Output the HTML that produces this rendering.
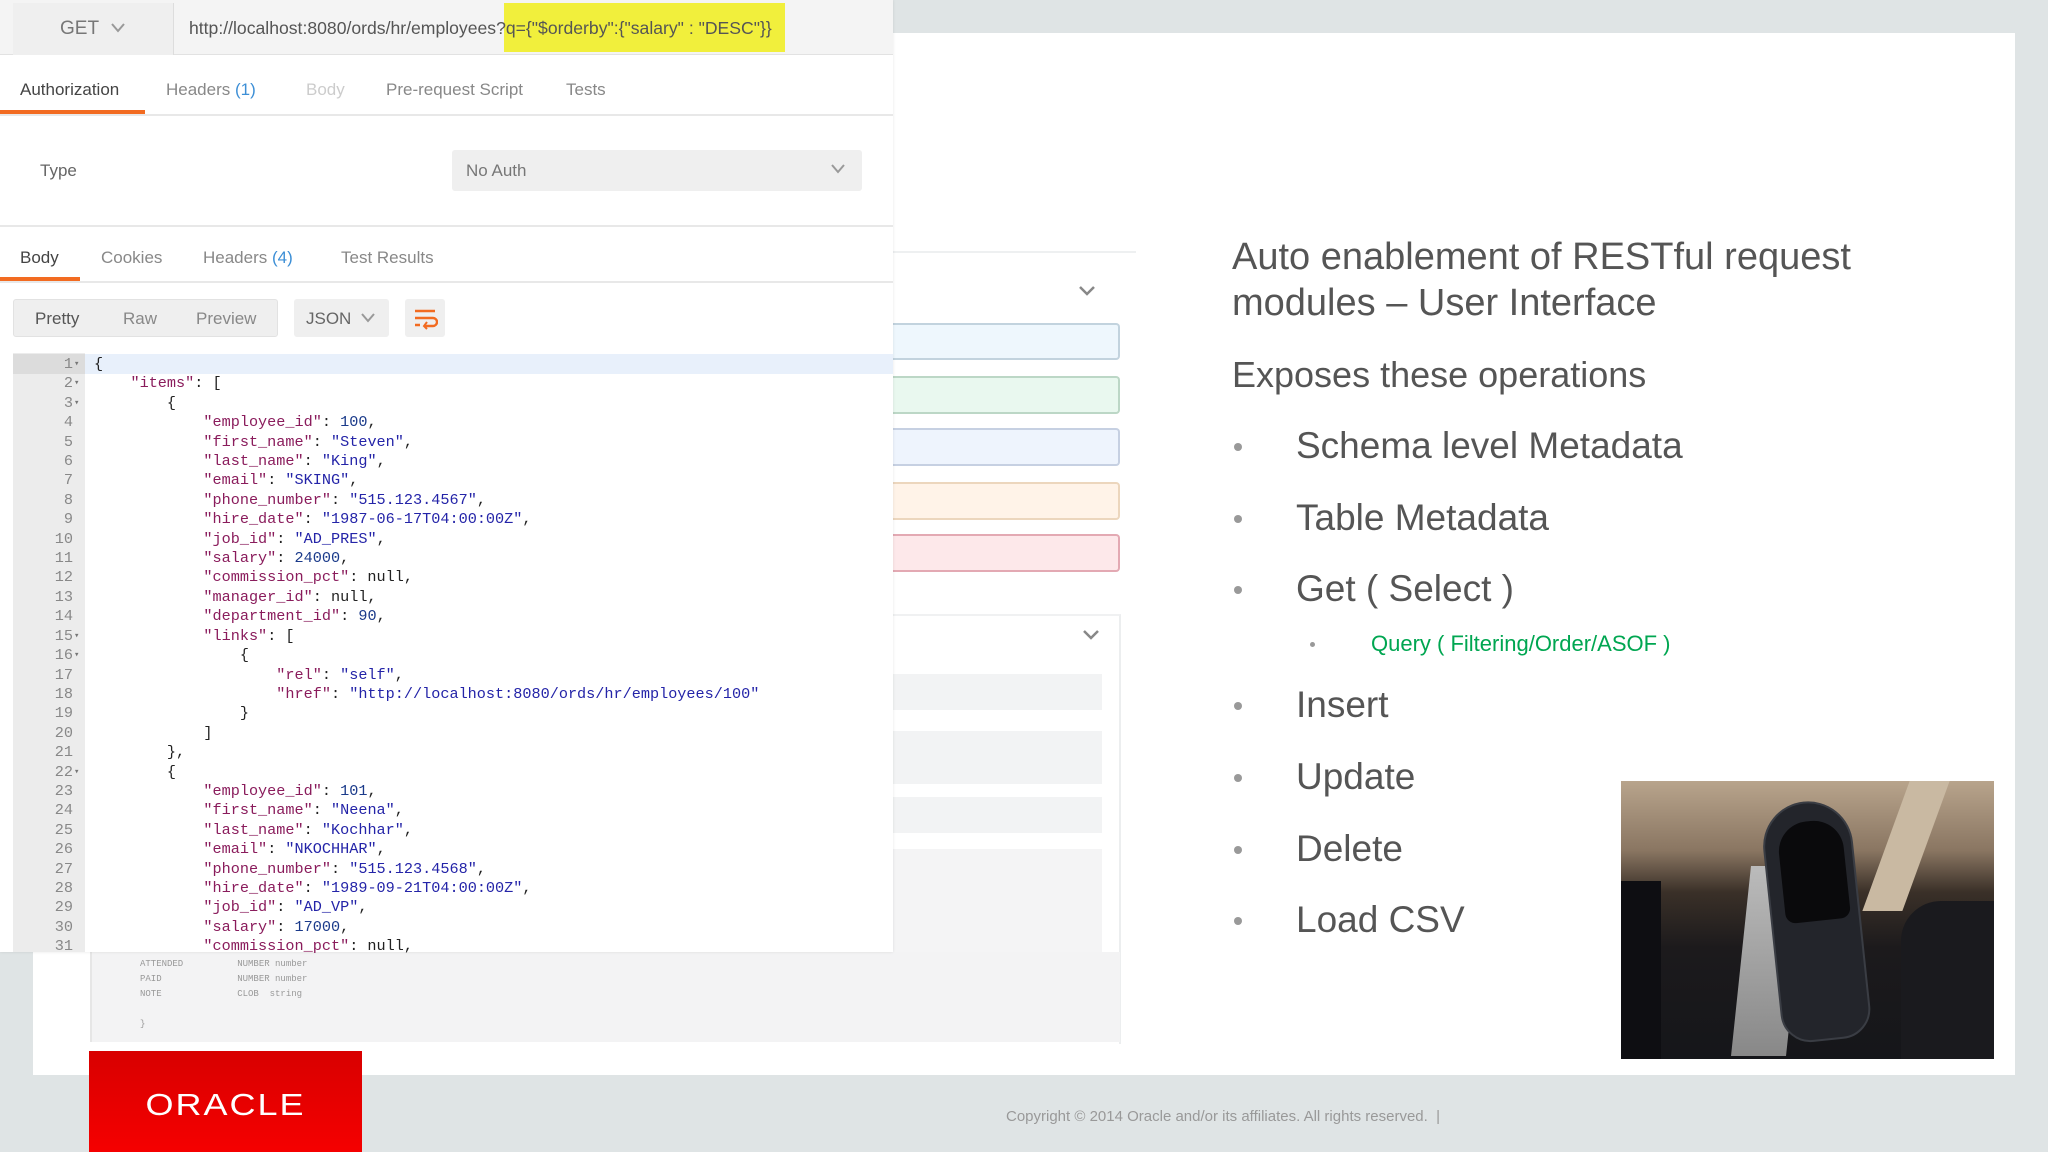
<!DOCTYPE html>
<html><head><meta charset="utf-8"><style>
*{margin:0;padding:0;box-sizing:border-box}
body{width:2048px;height:1152px;background:#dfe4e5;position:relative;overflow:hidden;font-family:"Liberation Sans",sans-serif}
.a{position:absolute}
.slide{left:33px;top:33px;width:1982px;height:1042px;background:#fff}
.pm{left:0;top:0;width:893px;height:952px;background:#fff;box-shadow:0 0 3px rgba(0,0,0,.1)}
.code{font-family:"Liberation Mono",monospace;font-size:15.2px;line-height:19.4px;white-space:pre;color:#222;letter-spacing:0}
.k{color:#8a1c5c}.s{color:#2424a8}.n{color:#1a3a8a}
.tab{font-size:17px;color:#888}
.b{font-family:"Liberation Sans",sans-serif;color:#555;font-size:37px}
.dot{width:8px;height:8px;border-radius:50%;background:#999}
</style></head><body>
<div class="a slide"></div>

<div class="a" style="left:893px;top:251px;width:243px;height:2px;background:#eef0f1"></div>
<svg class="a" style="left:1078px;top:285px" width="18" height="12"><path d="M2 2l7 7 7-7" fill="none" stroke="#888" stroke-width="2.5"/></svg>
<div class="a" style="left:893px;top:323px;width:227px;height:37px;background:#eef7fd;border:2px solid #c2d3de;border-left:none;border-radius:0 4px 4px 0"></div>
<div class="a" style="left:893px;top:376px;width:227px;height:38px;background:#e9f8ef;border:2px solid #bcd7c6;border-left:none;border-radius:0 4px 4px 0"></div>
<div class="a" style="left:893px;top:428px;width:227px;height:38px;background:#eef4fd;border:2px solid #c6d0e2;border-left:none;border-radius:0 4px 4px 0"></div>
<div class="a" style="left:893px;top:482px;width:227px;height:38px;background:#fff3e8;border:2px solid #ecd6bd;border-left:none;border-radius:0 4px 4px 0"></div>
<div class="a" style="left:893px;top:534px;width:227px;height:38px;background:#fde8ea;border:2px solid #e3a9b3;border-left:none;border-radius:0 4px 4px 0"></div>
<div class="a" style="left:893px;top:614px;width:228px;height:430px;border-right:2px solid #eceeef;border-top:2px solid #f0f1f2"></div>
<svg class="a" style="left:1082px;top:629px" width="18" height="12"><path d="M2 2l7 7 7-7" fill="none" stroke="#888" stroke-width="2.5"/></svg>
<div class="a" style="left:893px;top:674px;width:209px;height:36px;background:#f2f3f4"></div>
<div class="a" style="left:893px;top:731px;width:209px;height:53px;background:#f2f3f4"></div>
<div class="a" style="left:893px;top:797px;width:209px;height:36px;background:#f2f3f4"></div>
<div class="a" style="left:893px;top:849px;width:209px;height:193px;background:#f4f4f5"></div>
<div class="a" style="left:92px;top:952px;width:1028px;height:90px;background:#f3f3f4"></div>
<div class="a" style="left:90px;top:952px;width:2px;height:90px;background:#e6e6e6"></div>
<div class="a" style="left:140px;top:957px;font-size:9px;color:#999;line-height:15px;font-family:'Liberation Mono',monospace">ATTENDED&nbsp;&nbsp;&nbsp;&nbsp;&nbsp;&nbsp;&nbsp;&nbsp;&nbsp;&nbsp;NUMBER number<br>PAID&nbsp;&nbsp;&nbsp;&nbsp;&nbsp;&nbsp;&nbsp;&nbsp;&nbsp;&nbsp;&nbsp;&nbsp;&nbsp;&nbsp;NUMBER number<br>NOTE&nbsp;&nbsp;&nbsp;&nbsp;&nbsp;&nbsp;&nbsp;&nbsp;&nbsp;&nbsp;&nbsp;&nbsp;&nbsp;&nbsp;CLOB&nbsp;&nbsp;string<br><br>}</div>

<div class="a pm">
  <div class="a" style="left:0;top:0;width:893px;height:55px;background:#f4f4f4;border-bottom:1px solid #e2e2e2"></div>
  <div class="a" style="left:13px;top:3px;width:161px;height:52px;background:#efefef;border-right:1px solid #ddd"></div>
  <div class="a" style="left:60px;top:18px;font-size:19px;color:#777">GET</div>
  <svg class="a" style="left:110px;top:22px" width="16" height="12"><path d="M2 2l6 7 6-7" fill="none" stroke="#999" stroke-width="2"/></svg>
  <div class="a" style="left:504px;top:3px;width:281px;height:49px;background:#f1ef3c"></div>
  <div class="a" style="left:189px;top:18px;font-size:17.6px;color:#555;white-space:nowrap;letter-spacing:0">http://localhost:8080/ords/hr/employees?q={"$orderby":{"salary" : "DESC"}}</div>

  <div class="a" style="left:0;top:114px;width:893px;height:2px;background:#e8e8e8"></div>
  <div class="a" style="left:0;top:110px;width:145px;height:4px;background:#f26b21"></div>
  <div class="a tab" style="left:20px;top:80px;color:#444">Authorization</div>
  <div class="a tab" style="left:166px;top:80px">Headers <span style="color:#3d8fd6">(1)</span></div>
  <div class="a tab" style="left:306px;top:80px;color:#ccc">Body</div>
  <div class="a tab" style="left:386px;top:80px">Pre-request Script</div>
  <div class="a tab" style="left:566px;top:80px">Tests</div>

  <div class="a tab" style="left:40px;top:161px;color:#666">Type</div>
  <div class="a" style="left:452px;top:150px;width:410px;height:41px;background:#efefef;border-radius:3px"></div>
  <div class="a tab" style="left:466px;top:161px;color:#777">No Auth</div>
  <svg class="a" style="left:830px;top:163px" width="16" height="12"><path d="M2 2l6 7 6-7" fill="none" stroke="#999" stroke-width="2"/></svg>

  <div class="a" style="left:0;top:225px;width:893px;height:2px;background:#e8e8e8"></div>
  <div class="a" style="left:0;top:281px;width:893px;height:2px;background:#e8e8e8"></div>
  <div class="a" style="left:0;top:277px;width:80px;height:4px;background:#f26b21"></div>
  <div class="a tab" style="left:20px;top:248px;color:#444">Body</div>
  <div class="a tab" style="left:101px;top:248px">Cookies</div>
  <div class="a tab" style="left:203px;top:248px">Headers <span style="color:#3d8fd6">(4)</span></div>
  <div class="a tab" style="left:341px;top:248px">Test Results</div>

  <div class="a" style="left:13px;top:299px;width:265px;height:38px;background:#efefef;border:1px solid #e2e2e2;border-radius:3px"></div>
  <div class="a tab" style="left:35px;top:309px;color:#555">Pretty</div>
  <div class="a tab" style="left:123px;top:309px">Raw</div>
  <div class="a tab" style="left:196px;top:309px">Preview</div>
  <div class="a" style="left:294px;top:299px;width:95px;height:38px;background:#efefef;border-radius:3px"></div>
  <div class="a tab" style="left:306px;top:309px;color:#666">JSON</div>
  <svg class="a" style="left:360px;top:312px" width="16" height="12"><path d="M2 2l6 7 6-7" fill="none" stroke="#999" stroke-width="2"/></svg>
  <div class="a" style="left:405px;top:299px;width:40px;height:38px;background:#efefef;border-radius:3px"></div>
  <svg class="a" style="left:412px;top:306px" width="26" height="24"><path d="M3 5h20M3 12h18a4 4 0 0 1 0 8h-8M3 19h5" fill="none" stroke="#f26b21" stroke-width="2.4"/><path d="M15 16l-3 4 3 3" fill="none" stroke="#f26b21" stroke-width="2"/></svg>

  <div class="a" style="left:13px;top:353px;width:72px;height:599px;background:#ececec"></div>
  <div class="a" style="left:13px;top:354px;width:880px;height:20px;background:#e8f0fb"></div>
  <div class="a" style="left:13px;top:354px;width:72px;height:20px;background:#dcdcdc"></div>
  <div class="a code" style="left:13px;top:355px;width:60px;text-align:right;color:#888">1
2
3
4
5
6
7
8
9
10
11
12
13
14
15
16
17
18
19
20
21
22
23
24
25
26
27
28
29
30
31</div>
  <div class="a code" style="left:74px;top:355px;font-size:9px;color:#777">▾
▾
▾











▾
▾





▾</div>
  <div class="a code" style="left:94px;top:355px">{
    <span class="k">"items"</span>: [
        {
            <span class="k">"employee_id"</span>: <span class="n">100</span>,
            <span class="k">"first_name"</span>: <span class="s">"Steven"</span>,
            <span class="k">"last_name"</span>: <span class="s">"King"</span>,
            <span class="k">"email"</span>: <span class="s">"SKING"</span>,
            <span class="k">"phone_number"</span>: <span class="s">"515.123.4567"</span>,
            <span class="k">"hire_date"</span>: <span class="s">"1987-06-17T04:00:00Z"</span>,
            <span class="k">"job_id"</span>: <span class="s">"AD_PRES"</span>,
            <span class="k">"salary"</span>: <span class="n">24000</span>,
            <span class="k">"commission_pct"</span>: null,
            <span class="k">"manager_id"</span>: null,
            <span class="k">"department_id"</span>: <span class="n">90</span>,
            <span class="k">"links"</span>: [
                {
                    <span class="k">"rel"</span>: <span class="s">"self"</span>,
                    <span class="k">"href"</span>: <span class="s">"http://localhost:8080/ords/hr/employees/100"</span>
                }
            ]
        },
        {
            <span class="k">"employee_id"</span>: <span class="n">101</span>,
            <span class="k">"first_name"</span>: <span class="s">"Neena"</span>,
            <span class="k">"last_name"</span>: <span class="s">"Kochhar"</span>,
            <span class="k">"email"</span>: <span class="s">"NKOCHHAR"</span>,
            <span class="k">"phone_number"</span>: <span class="s">"515.123.4568"</span>,
            <span class="k">"hire_date"</span>: <span class="s">"1989-09-21T04:00:00Z"</span>,
            <span class="k">"job_id"</span>: <span class="s">"AD_VP"</span>,
            <span class="k">"salary"</span>: <span class="n">17000</span>,
            <span class="k">"commission_pct"</span>: null,</div>
</div>

<div class="a" style="left:1232px;top:234px;font-size:38px;line-height:46px;color:#555">Auto enablement of RESTful request<br>modules – User Interface</div>
<div class="a" style="left:1232px;top:354px;font-size:36px;color:#555">Exposes these operations</div>
<div class="a dot" style="left:1234px;top:443px"></div><div class="a b" style="left:1296px;top:425px">Schema level Metadata</div>
<div class="a dot" style="left:1234px;top:515px"></div><div class="a b" style="left:1296px;top:497px">Table Metadata</div>
<div class="a dot" style="left:1234px;top:586px"></div><div class="a b" style="left:1296px;top:568px">Get ( Select )</div>
<div class="a dot" style="left:1310px;top:642px;width:5px;height:5px"></div><div class="a" style="left:1371px;top:631px;font-size:22px;color:#00a651">Query ( Filtering/Order/ASOF )</div>
<div class="a dot" style="left:1234px;top:702px"></div><div class="a b" style="left:1296px;top:684px">Insert</div>
<div class="a dot" style="left:1234px;top:774px"></div><div class="a b" style="left:1296px;top:756px">Update</div>
<div class="a dot" style="left:1234px;top:846px"></div><div class="a b" style="left:1296px;top:828px">Delete</div>
<div class="a dot" style="left:1234px;top:917px"></div><div class="a b" style="left:1296px;top:899px">Load CSV</div>

<div class="a" style="left:1621px;top:781px;width:373px;height:278px;background:linear-gradient(180deg,#b8a48c 0%,#8a7662 25%,#3a3028 40%,#1c1a1c 60%,#15161a 100%);overflow:hidden">
  <div class="a" style="left:120px;top:85px;width:55px;height:190px;background:linear-gradient(180deg,#bbb,#888);transform:skewX(-6deg)"></div>
  <div class="a" style="left:0;top:100px;width:40px;height:178px;background:#0e0e12"></div>
  <div class="a" style="left:265px;top:0;width:40px;height:130px;background:#c9b9a2;transform:skewX(-20deg)"></div>
  <div class="a" style="left:280px;top:120px;width:100px;height:160px;background:#1a1a1e;border-radius:40px 0 0 0"></div>
  <div class="a" style="left:150px;top:20px;width:90px;height:240px;background:#23252b;border-radius:45px 45px 30px 30px;transform:rotate(-6deg);border:2px solid #3a3d44"></div>
  <div class="a" style="left:160px;top:40px;width:65px;height:100px;background:#0a0a0c;border-radius:30px 30px 10px 10px;transform:rotate(-6deg)"></div>
</div>

<div class="a" style="left:89px;top:1051px;width:273px;height:101px;background:linear-gradient(180deg,#d80000,#f50000)"></div>
<div class="a" style="left:89px;top:1084px;width:273px;text-align:center;color:#fff;font-size:36px;letter-spacing:2px;transform:scaleY(.85)">ORACLE</div>
<div class="a" style="left:1006px;top:1108px;font-size:15px;color:#999">Copyright © 2014 Oracle and/or its affiliates. All rights reserved. &nbsp;|</div>
</body></html>
